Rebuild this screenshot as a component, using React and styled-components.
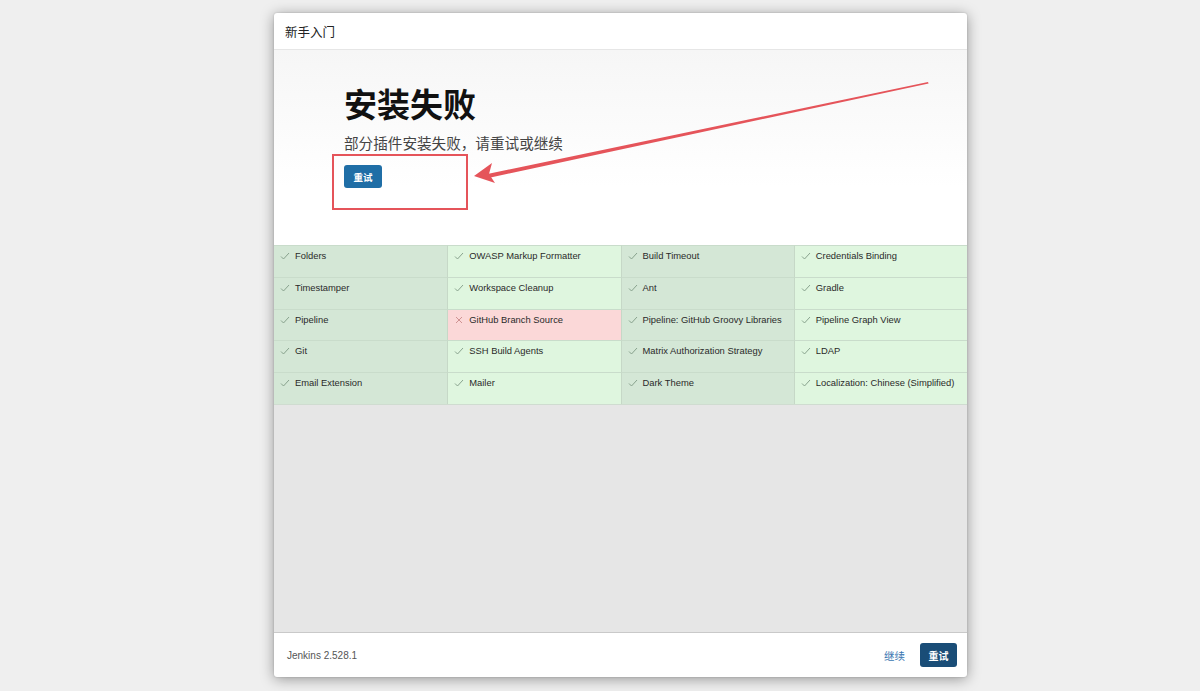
import styled, { createGlobalStyle } from "styled-components";

const plugins = [
  "Folders", "OWASP Markup Formatter", "Build Timeout", "Credentials Binding",
  "Timestamper", "Workspace Cleanup", "Ant", "Gradle",
  "Pipeline", "GitHub Branch Source", "Pipeline: GitHub Groovy Libraries", "Pipeline Graph View",
  "Git", "SSH Build Agents", "Matrix Authorization Strategy", "LDAP",
  "Email Extension", "Mailer", "Dark Theme", "Localization: Chinese (Simplified)",
];
const failed = ["GitHub Branch Source"];

const GlobalStyle = createGlobalStyle`
  html, body {
    margin: 0;
    padding: 0;
    background: #efefef;
    font-family: "Liberation Sans", "Noto Sans CJK SC", Arial, sans-serif;
  }
`;

const Page = styled.div`
  width: 1200px;
  height: 691px;
  padding: 13px 0 0 274px;
  box-sizing: border-box;
`;

const Modal = styled.div`
  width: 693px;
  height: 664px;
  background: #fff;
  border-radius: 3px;
  box-shadow: 0 2px 14px rgba(0, 0, 0, 0.38), 0 0 2px rgba(0, 0, 0, 0.2);
  display: flex;
  flex-direction: column;
  overflow: hidden;
`;

const Header = styled.div`
  height: 36px;
  border-bottom: 1px solid #e6e6e6;
  display: flex;
  align-items: center;
  padding-left: 11px;
  font-size: 12.5px;
  color: #222;
`;

const Hero = styled.div`
  position: relative;
  height: 195px;
  box-sizing: border-box;
  padding: 36px 0 0 70px;
  background: linear-gradient(#f6f6f6, #ffffff 70%);
`;

const Title = styled.h1`
  margin: 0;
  font-size: 33px;
  line-height: 40px;
  font-weight: 700;
  color: #111;
`;

const Subtitle = styled.p`
  margin: 8px 0 0;
  font-size: 14.6px;
  line-height: 20px;
  color: #444;
`;

const Button = styled.button`
  margin-top: ${(p) => p.$mt || 0}px;
  width: ${(p) => p.$w}px;
  height: ${(p) => p.$h}px;
  padding: 0;
  border: none;
  border-radius: 3px;
  background: ${(p) => p.$bg};
  color: #fff;
  font-family: inherit;
  font-size: ${(p) => p.$fs}px;
  font-weight: 700;
  display: flex;
  align-items: center;
  justify-content: center;
`;

const Annotation = styled.svg`
  position: absolute;
  left: 0;
  top: 0;
  width: 693px;
  height: 195px;
  pointer-events: none;
`;

const Grid = styled.div`
  display: grid;
  grid-template-columns: repeat(4, 1fr);
  grid-auto-rows: 31.8px;
  border-bottom: 1px solid #cfdcd0;
`;

const Cell = styled.div`
  display: flex;
  align-items: flex-start;
  padding: 4px 0 0 6px;
  box-sizing: border-box;
  gap: 5px;
  font-size: 9.4px;
  line-height: 12px;
  white-space: nowrap;
  color: #2a2a2a;
  background: ${(p) => (p.$fail ? "#fbd8d8" : p.$dark ? "#d4e7d6" : "#dff6df")};
  border-top: 1px solid #c9dccb;
  border-left: ${(p) => (p.$first ? "none" : "1px solid #c6d8c7")};
`;

const Mark = styled.span`
  width: 10px;
  height: 12px;
  display: flex;
  align-items: center;
  flex: none;
`;

const Filler = styled.div`
  flex: 1;
  background: #e6e6e6;
`;

const Footer = styled.div`
  height: 44px;
  border-top: 1px solid #c9c9c9;
  display: flex;
  align-items: center;
  padding: 0 10px 0 13px;
  gap: 15px;
`;

const Version = styled.span`
  flex: 1;
  font-size: 10px;
  color: #555;
`;

const Link = styled.span`
  font-size: 10.5px;
  color: #3a78b2;
`;

const Check = () => (
  <svg width="10" height="10" viewBox="0 0 10 10">
    <polyline points="1,5.5 3.5,8 9,2" fill="none" stroke="#7f9a84" strokeWidth="0.9" />
  </svg>
);

const Cross = () => (
  <svg width="10" height="10" viewBox="0 0 10 10">
    <path d="M2 2 L8 8 M8 2 L2 8" fill="none" stroke="#c98a8a" strokeWidth="0.9" />
  </svg>
);

export default function App() {
  return (
    <>
      <GlobalStyle />
      <Page>
        <Modal>
          <Header>新手入门</Header>
          <Hero>
            <Title>安装失败</Title>
            <Subtitle>部分插件安装失败，请重试或继续</Subtitle>
            <Button $mt={11} $w={38} $h={23} $fs={9.5} $bg="#1f6ea6">重试</Button>
            <Annotation viewBox="0 0 693 195">
              <rect x="59" y="105" width="134" height="54" fill="none" stroke="#e5545a" strokeWidth="2" />
              <polygon points="654,32 654.6,33.4 212,128.5 211,124.5" fill="#e5545a" />
              <polygon points="200,126 218,113 215,124 221,133" fill="#e5545a" />
            </Annotation>
          </Hero>
          <Grid>
            {plugins.map((name, i) => {
              const fail = failed.includes(name);
              const col = i % 4;
              return (
                <Cell key={name} $fail={fail} $dark={col % 2 === 0} $first={col === 0}>
                  <Mark>{fail ? <Cross /> : <Check />}</Mark>
                  {name}
                </Cell>
              );
            })}
          </Grid>
          <Filler />
          <Footer>
            <Version>Jenkins 2.528.1</Version>
            <Link>继续</Link>
            <Button $w={37} $h={24} $fs={10} $bg="#1a4d77">重试</Button>
          </Footer>
        </Modal>
      </Page>
    </>
  );
}
